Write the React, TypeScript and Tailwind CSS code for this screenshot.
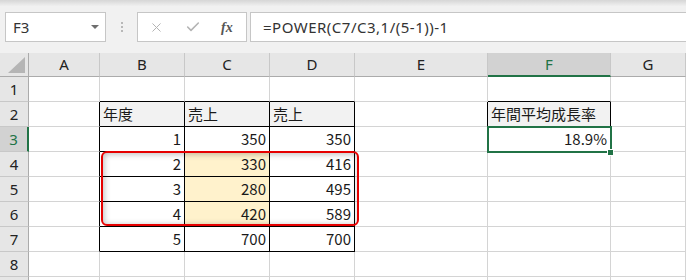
import { X, Check } from "lucide-react";

const COLS = ["", "A", "B", "C", "D", "E", "F", "G"];
const WIDTHS = [29, 71, 85, 85, 85, 133, 123, 75];

type Val = { text: string; align?: "left" | "right" };

const DATA: Record<string, Val> = {
  "2-2": { text: "年度", align: "left" },
  "2-3": { text: "売上", align: "left" },
  "2-4": { text: "売上", align: "left" },
  "2-6": { text: "年間平均成長率", align: "left" },
  "3-2": { text: "1" },
  "3-3": { text: "350" },
  "3-4": { text: "350" },
  "3-6": { text: "18.9%" },
  "4-2": { text: "2" },
  "4-3": { text: "330" },
  "4-4": { text: "416" },
  "5-2": { text: "3" },
  "5-3": { text: "280" },
  "5-4": { text: "495" },
  "6-2": { text: "4" },
  "6-3": { text: "420" },
  "6-4": { text: "589" },
  "7-2": { text: "5" },
  "7-3": { text: "700" },
  "7-4": { text: "700" },
};

const inTable = (r: number, c: number) =>
  (r >= 2 && r <= 7 && c >= 2 && c <= 4) || (r === 2 && c === 6);

function Cell({ r, c }: { r: number; c: number }) {
  const v = DATA[`${r}-${c}`];
  const right = inTable(r, c) || inTable(r, c + 1);
  const bottom = inTable(r, c) || inTable(r + 1, c);
  let bg = "bg-white";
  if (r === 2 && inTable(r, c)) bg = "bg-[#f2f2f2]";
  if (c === 3 && r >= 4 && r <= 6) bg = "bg-[#fff2cc]";

  return (
    <div
      className={`flex items-center px-[3px] pt-[1px] text-[15px] text-[#1a1a1a] border-r border-b ${bg} ${
        right ? "border-r-black" : "border-r-[#d4d4d4]"
      } ${bottom ? "border-b-black" : "border-b-[#d4d4d4]"} ${
        v?.align === "left" ? "justify-start" : "justify-end"
      }`}
    >
      {v?.text}
    </div>
  );
}

export default function App() {
  // row 9 only peeks in at the bottom edge, its label is below the fold
  const rows = [1, 2, 3, 4, 5, 6, 7, 8, 9];

  return (
    <div
      className="relative w-[686px] h-[280px] overflow-hidden bg-white"
      style={{ fontFamily: '"Noto Sans CJK JP", "Noto Sans", sans-serif' }}
    >
      {/* formula bar */}
      <div className="h-[53px] bg-gradient-to-b from-[#d6d6d6] via-[#f1f1f1] via-[12%] to-[#f1f1f1] pt-[12px]">
        <div className="flex h-[30px] items-stretch">
          <div className="ml-[5px] w-[101px] bg-white border border-[#c6c6c6] flex items-center justify-between pl-[7px] pr-[6px]">
            <span className="text-[15px] text-[#333] font-['Noto_Sans',sans-serif]">F3</span>
            <svg width="8" height="4" viewBox="0 0 8 4">
              <path d="M0 0 L8 0 L4 4 Z" fill="#6e6e6e" />
            </svg>
          </div>
          <div className="w-[31px] flex flex-col items-center justify-center gap-[2px]">
            <span className="w-[2px] h-[2px] bg-[#b8b8b8]" />
            <span className="w-[2px] h-[2px] bg-[#b8b8b8]" />
            <span className="w-[2px] h-[2px] bg-[#b8b8b8]" />
          </div>
          <div className="w-[110px] bg-white border border-[#c6c6c6] flex items-center pl-[11px]">
            <X size={15} strokeWidth={1.6} className="text-[#b4b4b4]" />
            <Check size={16} strokeWidth={2.4} className="ml-[21px] text-[#b4b4b4]" />
            <span className="ml-[20px] text-[14px] italic text-[#555] font-['Liberation_Serif',serif] font-bold">
              fx
            </span>
          </div>
          <div className="ml-[3px] flex-1 bg-white border border-r-0 border-[#c6c6c6] flex items-center pl-[12px]">
            <span className="text-[15px] text-[#333] tracking-[0.5px] font-['Noto_Sans',sans-serif]">
              =POWER(C7/C3,1/(5-1))-1
            </span>
          </div>
        </div>
      </div>

      {/* sheet grid */}
      <div
        className="grid"
        style={{
          gridTemplateColumns: WIDTHS.map((w) => `${w}px`).join(" "),
          gridTemplateRows: `24px repeat(${rows.length}, 25px)`,
        }}
      >
        {COLS.map((col, c) =>
          c === 0 ? (
            <div key="corner" className="relative bg-[#e6e6e6] border-r border-b border-r-[#ababab] border-b-[#ababab]">
              <svg className="absolute right-[3px] bottom-[3px]" width="17" height="16" viewBox="0 0 17 16">
                <path d="M17 0 L17 16 L0 16 Z" fill="#b5b5b5" />
              </svg>
            </div>
          ) : (
            <div
              key={col}
              className={`flex items-center justify-center text-[15px] font-['Noto_Sans',sans-serif] border-r border-r-[#c8c8c8] ${
                col === "F"
                  ? "bg-[#d2d2d2] text-[#217346] border-b-2 border-b-[#217346]"
                  : "bg-[#e6e6e6] text-[#222] border-b border-b-[#ababab]"
              }`}
            >
              {col}
            </div>
          )
        )}
        {rows.map((r) =>
          WIDTHS.map((_, c) =>
            c === 0 ? (
              <div
                key={`${r}-h`}
                className={`flex items-center justify-center text-[15px] font-['Noto_Sans',sans-serif] border-b border-b-[#c8c8c8] ${
                  r === 3
                    ? "bg-[#d2d2d2] text-[#217346] border-r-2 border-r-[#217346]"
                    : "bg-[#e6e6e6] text-[#222] border-r border-r-[#ababab]"
                }`}
              >
                {r < 9 ? r : ""}
              </div>
            ) : (
              <Cell key={`${r}-${c}`} r={r} c={c} />
            )
          )
        )}
      </div>

      {/* active cell F3 */}
      <div className="absolute left-[487px] top-[126px] w-[125px] h-[27px] border-2 border-[#217346]" />
      <div className="absolute left-[607px] top-[149px] w-[7px] h-[7px] bg-[#217346] border border-white" />

      {/* highlight C4:C6 */}
      <div className="absolute left-[101px] top-[151px] w-[258px] h-[75px] rounded-[6px] border-2 border-[#e60000] shadow-[inset_1px_1px_6px_rgba(0,0,0,0.28)]" />
    </div>
  );
}
